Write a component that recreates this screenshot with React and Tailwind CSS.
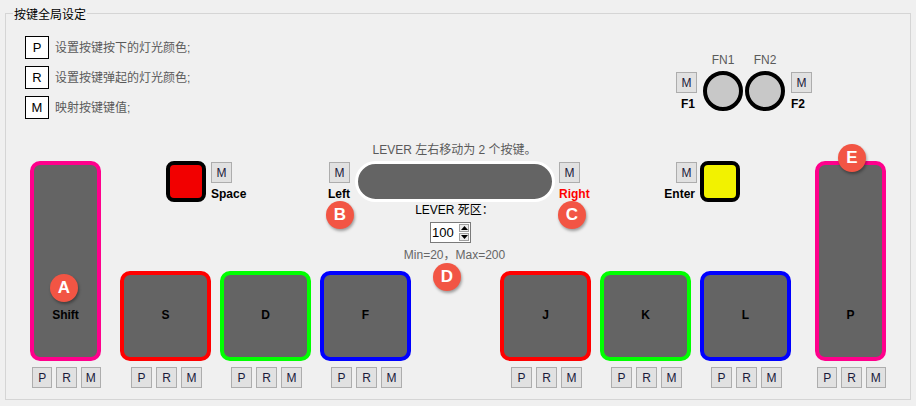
const FONT = { fontFamily: '"Liberation Sans", Arial, "Noto Sans CJK SC", sans-serif' };

function SmallBtn({ label }) {
  return (
    <div className="w-[21px] h-[21px] box-border border border-[#adadad] bg-[#e1e1e1] flex items-center justify-center text-[12px] text-[#1a1a3a] leading-none">
      {label}
    </div>
  );
}

function PRM() {
  return (
    <div className="flex justify-center gap-[4px] pl-[2px] mt-[6px]">
      <SmallBtn label="P" />
      <SmallBtn label="R" />
      <SmallBtn label="M" />
    </div>
  );
}

function Badge({ letter, className }) {
  return (
    <div
      className={`absolute w-[28px] h-[28px] rounded-full bg-[#f25544] text-white font-bold text-[17px] flex items-center justify-center shadow-[1px_2px_3px_rgba(0,0,0,0.35)] ${className}`}
    >
      {letter}
    </div>
  );
}

function ShortKey({ label, border }) {
  return (
    <div className="w-[91px] flex flex-col">
      <div className={`w-[91px] h-[90px] box-border border-4 ${border} rounded-[10px] bg-[#646464] flex items-center justify-center pb-[2px] text-[12px] font-bold text-black`}>
        {label}
      </div>
      <PRM />
    </div>
  );
}

function TallKey({ label }) {
  return (
    <div className="w-[71px] flex flex-col mt-[18px]">
      <div className="w-[71px] h-[200px] box-border border-4 border-[#ff008c] rounded-[10px] bg-[#646464] flex flex-col justify-end items-center pb-[33px] text-[12px] font-bold text-black">
        {label}
      </div>
      <PRM />
    </div>
  );
}

function Arrow({ up }) {
  return (
    <svg width="7" height="4" viewBox="0 0 7 4">
      <path d={up ? 'M0 4 L3.5 0 L7 4 Z' : 'M0 0 L3.5 4 L7 0 Z'} fill="#000" />
    </svg>
  );
}

export default function App() {
  const legend = [
    ['P', '设置按键按下的灯光颜色;'],
    ['R', '设置按键弹起的灯光颜色;'],
    ['M', '映射按键键值;'],
  ];

  return (
    <div className="w-[916px] h-[406px] bg-[#f0f0f0] relative overflow-hidden" style={FONT}>
      {/* fieldset */}
      <div className="ml-[5px] mt-[13px] w-[906px] h-[387px] box-border border border-[#d5d5d5] relative">
        <span className="absolute left-[7px] -top-[7px] px-[1px] bg-[#f0f0f0] text-[12px] leading-[16px] text-black">
          按键全局设定
        </span>

        {/* header: legend + FN */}
        <div className="flex justify-between pr-[98px] h-[129px]">
          <div className="pl-[19px] pt-[22px] flex flex-col gap-[7px]">
            {legend.map(([k, t]) => (
              <div key={k} className="flex items-center">
                <div className="w-[24px] h-[23px] box-border border border-black bg-white flex items-center justify-center text-[13px] text-black">
                  {k}
                </div>
                <span className="ml-[6px] text-[12px] text-[#5a5a5a]">{t}</span>
              </div>
            ))}
          </div>

          <div className="flex items-start mt-[39px]">
            <div className="w-[21px] flex flex-col items-end">
              <div className="mt-[19px]">
                <SmallBtn label="M" />
              </div>
              <span className="mt-[4px] mr-[2px] text-[12px] leading-[15px] font-bold text-black">F1</span>
            </div>
            <div className="ml-[6px] flex flex-col items-center">
              <span className="text-[12px] leading-[15px] text-[#5a5a5a]">FN1</span>
              <div className="mt-[3px] w-[40px] h-[40px] box-border rounded-full border-4 border-black bg-[#c8c8c8]" />
            </div>
            <div className="ml-[2px] flex flex-col items-center">
              <span className="text-[12px] leading-[15px] text-[#5a5a5a]">FN2</span>
              <div className="mt-[3px] w-[40px] h-[40px] box-border rounded-full border-4 border-black bg-[#c8c8c8]" />
            </div>
            <div className="ml-[6px] w-[21px] flex flex-col items-start">
              <div className="mt-[19px]">
                <SmallBtn label="M" />
              </div>
              <span className="mt-[4px] text-[12px] leading-[15px] font-bold text-black">F2</span>
            </div>
          </div>
        </div>

        {/* main keys area */}
        <div className="flex items-start pl-[24px]">
          <TallKey label="Shift" />

          <div className="ml-[19px] w-[671px] flex flex-col">
            {/* top section: space, lever, enter */}
            <div className="h-[128px] flex items-start">
              <div className="w-[46px]" />
              <div className="w-[163px] flex items-start">
                <div className="mt-[18px] w-[40px] h-[41px] box-border border-4 border-black rounded-[8px] bg-[#f20000]" />
                <div className="ml-[5px] flex flex-col items-start">
                  <div className="mt-[19px]">
                    <SmallBtn label="M" />
                  </div>
                  <span className="mt-[4px] text-[12px] leading-[15px] font-bold text-black">Space</span>
                </div>
              </div>

              <div className="w-[251px] flex flex-col items-center">
                <span className="text-[12px] leading-[15px] text-[#5a5a5a] whitespace-nowrap">
                  LEVER 左右移动为 2 个按键。
                </span>
                <div className="mt-[3px] flex items-start">
                  <div className="w-[21px] flex flex-col items-end">
                    <div className="mt-[1px]">
                      <SmallBtn label="M" />
                    </div>
                    <span className="mt-[4px] text-[12px] leading-[15px] font-bold text-black">Left</span>
                  </div>
                  <div className="ml-[5px] w-[200px] h-[41px] box-border border-[3px] border-white rounded-full bg-[#646464]" />
                  <div className="ml-[4px] w-[21px] flex flex-col items-start">
                    <div className="mt-[1px]">
                      <SmallBtn label="M" />
                    </div>
                    <span className="mt-[4px] text-[12px] leading-[15px] font-bold text-[#ff0000] whitespace-nowrap">Right</span>
                  </div>
                </div>
                <span className="mt-[1px] text-[12px] leading-[15px] text-black whitespace-nowrap">LEVER 死区：</span>
                <div className="mt-[4px] mr-[8px] w-[41px] h-[21px] box-border border border-[#7a7a7a] bg-white flex items-center">
                  <span className="pl-[1px] text-[13px] leading-none text-black flex-1">100</span>
                  <div className="w-[11px] h-full flex flex-col py-[1px] pr-[1px] gap-[1px]">
                    <div className="flex-1 box-border border border-[#a0a0a0] bg-[#ececec] flex items-center justify-center">
                      <Arrow up />
                    </div>
                    <div className="flex-1 box-border border border-[#a0a0a0] bg-[#ececec] flex items-center justify-center">
                      <Arrow />
                    </div>
                  </div>
                </div>
                <span className="mt-[5px] text-[12px] leading-[15px] text-[#666666] whitespace-nowrap">Min=20，Max=200</span>
              </div>

              <div className="w-[96px]" />
              <div className="flex items-start">
                <div className="w-[21px] flex flex-col items-end">
                  <div className="mt-[19px]">
                    <SmallBtn label="M" />
                  </div>
                  <span className="mt-[4px] mr-[2px] text-[12px] leading-[15px] font-bold text-black">Enter</span>
                </div>
                <div className="ml-[3px] mt-[18px] w-[40px] h-[41px] box-border border-4 border-black rounded-[8px] bg-[#f2f200]" />
              </div>
            </div>

            {/* bottom keys */}
            <div className="flex items-start">
              <ShortKey label="S" border="border-[#ff0000]" />
              <div className="ml-[9px]">
                <ShortKey label="D" border="border-[#00ff00]" />
              </div>
              <div className="ml-[9px]">
                <ShortKey label="F" border="border-[#0000ff]" />
              </div>
              <div className="ml-[89px]">
                <ShortKey label="J" border="border-[#ff0000]" />
              </div>
              <div className="ml-[9px]">
                <ShortKey label="K" border="border-[#00ff00]" />
              </div>
              <div className="ml-[9px]">
                <ShortKey label="L" border="border-[#0000ff]" />
              </div>
            </div>
          </div>

          <div className="ml-[24px]">
            <TallKey label="P" />
          </div>
        </div>
      </div>

      {/* annotation badges */}
      <Badge letter="A" className="left-[50px] top-[274px]" />
      <Badge letter="B" className="left-[326px] top-[201px]" />
      <Badge letter="C" className="left-[558px] top-[201px]" />
      <Badge letter="D" className="left-[433px] top-[263px]" />
      <Badge letter="E" className="left-[838px] top-[144px]" />
    </div>
  );
}
